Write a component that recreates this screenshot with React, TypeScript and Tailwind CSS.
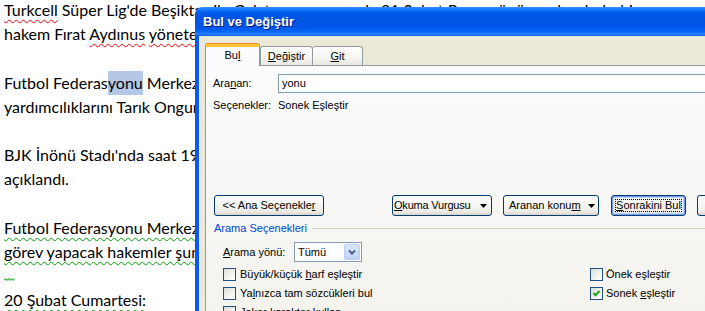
import type { ReactNode } from "react";

const red = "underline decoration-wavy decoration-[#ff0000] decoration-1 underline-offset-[3px]";
const green = "underline decoration-wavy decoration-[#00a000] decoration-1 underline-offset-[3px]";

function Line({ children }: { children?: ReactNode }) {
	return <div className="h-[24.2px] whitespace-nowrap leading-[24.2px]">{children ?? "\u00a0"}</div>;
}

function Btn({ children, w, focused }: { children: ReactNode; w: number; focused?: boolean }) {
	return (
		<div
			style={{ width: w }}
			className={`relative flex h-[21px] shrink-0 items-center rounded-[3px] border border-[#003c74] bg-[linear-gradient(to_bottom,#ffffff,#f5f4f0_55%,#ebe9e2_85%,#d8d2c6)] ${
				focused ? "shadow-[inset_0_0_0_1px_#7c9de9,inset_0_0_0_2px_#bcd4f8]" : ""
			}`}
		>
			{focused && <span className="absolute inset-[3px] border border-dotted border-black" />}
			{children}
		</div>
	);
}

function Tri() {
	return (
		<svg width="7" height="4" viewBox="0 0 7 4" className="shrink-0">
			<path d="M0 0 H7 L3.5 4 Z" fill="#000" />
		</svg>
	);
}

function Box({ checked }: { checked?: boolean }) {
	return (
		<span className="flex h-[13px] w-[13px] shrink-0 items-center justify-center border border-[#1c5180] bg-[linear-gradient(135deg,#dcdcd7,#f4f4f0_60%,#ffffff)]">
			{checked && (
				<svg width="9" height="9" viewBox="0 0 9 9">
					<path d="M1.5 4 L3.5 6.2 L7.5 2" fill="none" stroke="#21a121" strokeWidth="2" />
				</svg>
			)}
		</span>
	);
}

export default function App() {
	return (
		<div className="relative h-[311px] w-[705px] overflow-hidden bg-white">
			{/* document */}
			<div className="mt-[-2px] pl-[4px] font-['Lato',sans-serif] text-[16px] text-black">
				<Line>
					<span className={red}>Turkcell</span> Süper Lig'de Beşiktaş ile Galatasaray arasında 21 Şubat Pazar günü yapılacak derbi maçı
				</Line>
				<Line>
					hakem Fırat <span className={red}>Aydınus</span> <span className={red}>yönetecek</span>.
				</Line>
				<Line />
				<Line>
					Futbol Federas<span className="inline-block bg-[#b4c7e7] leading-[24.2px]">yonu</span> Merkez Hakem Kurulu tarafından yapılan açıklamaya göre
				</Line>
				<Line>yardımcılıklarını Tarık Ongun ile Cem Satman yapacak.</Line>
				<Line />
				<Line>BJK İnönü Stadı'nda saat 19.00'da başlayacak karşılaşmanın dördüncü hakemi de</Line>
				<Line>açıklandı.</Line>
				<Line />
				<Line>
					<span className={green}>Futbol Federasyonu Merkez Hakem Kurulu tarafından yapılan açıklamaya göre</span>
				</Line>
				<Line>
					<span className={green}>görev yapacak hakemler şunlar:</span>
				</Line>
				<div className="flex h-[24.2px] items-end pb-[7px]">
					<svg width="11" height="3" viewBox="0 0 11 3">
						<path d="M0 2.5 L1.5 0.5 L3 2.5 L4.5 0.5 L6 2.5 L7.5 0.5 L9 2.5 L10.5 0.5" fill="none" stroke="#00a000" strokeWidth="1" />
					</svg>
				</div>
				<Line>
					<span className={green}>20 Şubat Cumartesi:</span>
				</Line>
			</div>

			{/* dialog */}
			<div className="absolute left-[195px] top-[7px] flex h-[320px] w-[520px] flex-col font-['Liberation_Sans',Arial,sans-serif] text-[11px] text-black">
				<div className="flex h-[29px] shrink-0 items-center rounded-tl-[7px] bg-[linear-gradient(to_bottom,#3d8fff_0%,#167cff_8%,#0262ee_16%,#0057e5_25%,#0054e3_50%,#0057ea_70%,#0566f8_85%,#2a80ff_93%,#0a5ae8_100%)] pl-[8px]">
					<span className="text-[13px] font-bold text-white [text-shadow:1px_1px_#0a1883]">Bul ve Değiştir</span>
				</div>
				<div className="flex flex-1 border-l-[4px] border-[#0a5be9] bg-[#ece9d8]">
					<div className="flex flex-1 flex-col pl-[6px] pt-[7px]">
						{/* tabs */}
						<div className="flex h-[22px] items-end">
							<div className="relative z-10 -mb-px flex h-[22px] w-[55px] items-center justify-center rounded-t-[3px] border-x border-t-[3px] border-x-[#919b9c] border-t-[#ffc83c] bg-[#fcfcfe] pb-[2px] shadow-[0_-1px_0_#e68b2c]">
								Bu<u>l</u>
							</div>
							<div className="flex h-[19px] w-[53px] items-center justify-center rounded-t-[3px] border-x border-t border-[#919b9c] bg-[linear-gradient(to_bottom,#ffffff,#f3f3ef_70%,#e8e6df)]">
								<u>D</u>eğiştir
							</div>
							<div className="flex h-[19px] w-[50px] items-center justify-center rounded-t-[3px] border-r border-t border-[#919b9c] bg-[linear-gradient(to_bottom,#ffffff,#f3f3ef_70%,#e8e6df)]">
								<u>G</u>it
							</div>
						</div>
						{/* page */}
						<div className="flex flex-1 flex-col border-l border-t border-[#919b9c] bg-[linear-gradient(to_bottom,#fcfcfe,#f4f3ee_90%)] pl-[7px] pt-[8px]">
							<div className="flex h-[19px] items-center">
								<span className="w-[65px]">
									Ara<u>n</u>an:
								</span>
								<div className="flex h-[19px] flex-1 items-center border border-[#7f9db9] bg-white pl-[3px]">yonu</div>
							</div>
							<div className="mt-[5px] flex h-[14px] items-center">
								<span className="w-[65px]">Seçenekler:</span>
								<span>Sonek Eşleştir</span>
							</div>

							{/* buttons */}
							<div className="ml-[1px] mt-[83px] flex items-center">
								<Btn w={110}>
									<span className="w-full text-center">
										&lt;&lt; Ana Seçenekle<u>r</u>
									</span>
								</Btn>
								<div className="ml-[68px]">
									<Btn w={100}>
										<span className="flex w-full items-center justify-between pl-[1px] pr-[4px] tracking-[-0.2px]">
											<span>
												<u>O</u>kuma Vurgusu
											</span>
											<Tri />
										</span>
									</Btn>
								</div>
								<div className="ml-[11px]">
									<Btn w={96}>
										<span className="flex w-full items-center gap-[7px] pl-[5px]">
											<span>
												Aranan konu<u>m</u>
											</span>
											<Tri />
										</span>
									</Btn>
								</div>
								<div className="ml-[12px]">
									<Btn w={75} focused>
										<span className="w-full text-center">
											<u>S</u>onrakini Bul
										</span>
									</Btn>
								</div>
								<div className="ml-[11px]">
									<Btn w={75}>
										<span className="w-full text-center">İptal</span>
									</Btn>
								</div>
							</div>

							{/* group */}
							<div className="ml-[1px] mt-[5px] flex h-[14px] items-center">
								<span className="text-[#0046d5]">Arama Seçenekleri</span>
								<span className="ml-[5px] h-px flex-1 bg-[#d0d0bf]" />
							</div>

							<div className="ml-[10px] mt-[7px] flex h-[20px] items-center">
								<span className="w-[71px]">
									<u>A</u>rama yönü:
								</span>
								<div className="flex h-[20px] w-[68px] items-center justify-between border border-[#7f9db9] bg-white pl-[3px] pr-px">
									<span>Tümü</span>
									<span className="flex h-[16px] w-[16px] items-center justify-center rounded-[2px] border border-[#b9cdf7] bg-[linear-gradient(to_bottom,#dce7fd,#c1d3fb)]">
										<svg width="8" height="6" viewBox="0 0 8 6">
											<path d="M1 1.5 L4 4.5 L7 1.5" fill="none" stroke="#4d6185" strokeWidth="2" />
										</svg>
									</span>
								</div>
							</div>

							<div className="ml-[10px] mt-[3px] grid grid-cols-[367px_1fr]">
								<div className="flex h-[19px] items-center gap-[4px]">
									<Box />
									<span>
										Büyük/küçük <u>h</u>arf eşleştir
									</span>
								</div>
								<div className="flex h-[19px] items-center gap-[3px]">
									<Box />
									<span>Önek eşleştir</span>
								</div>
								<div className="flex h-[19px] items-center gap-[4px]">
									<Box />
									<span>
										Ya<u>l</u>nızca tam sözcükleri bul
									</span>
								</div>
								<div className="flex h-[19px] items-center gap-[3px]">
									<Box checked />
									<span>
										Sonek <u>e</u>şleştir
									</span>
								</div>
								<div className="flex h-[19px] items-center gap-[4px]">
									<Box />
									<span>Joker karakter kullan</span>
								</div>
							</div>
						</div>
					</div>
				</div>
			</div>
		</div>
	);
}
